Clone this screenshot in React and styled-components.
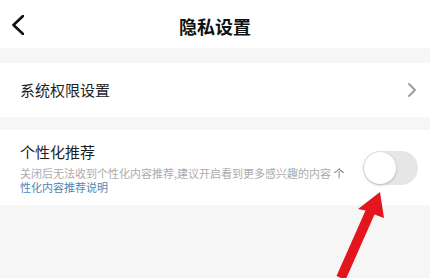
import styled, { createGlobalStyle } from 'styled-components';
import { useState } from 'react';

const GlobalStyle = createGlobalStyle`
  * { box-sizing: border-box; }
  body {
    margin: 0;
    background: #f6f6f6;
    font-family: "Noto Sans CJK SC", "Noto Sans", sans-serif;
  }
`;

export default function App(){
  const [on, setOn] = useState(false);
  return (
    <Page>
      <GlobalStyle />
      <Header>
        <BackButton>
          <svg width="12" height="20" viewBox="0 0 12 20">
            <polyline points="11,1 1.5,10 11,19" fill="none" stroke="#111" strokeWidth="2.6" strokeLinecap="round" strokeLinejoin="round" />
          </svg>
        </BackButton>
        <Title>隐私设置</Title>
        <span />
      </Header>
      <Gap size={15} />
      <LinkRow>
        <RowLabel>系统权限设置</RowLabel>
        <svg width="8" height="14" viewBox="0 0 8 14">
          <polyline points="1,1 7,7 1,13" fill="none" stroke="#9a9a9a" strokeWidth="1.8" strokeLinecap="round" strokeLinejoin="round" />
        </svg>
      </LinkRow>
      <Gap size={13} />
      <SwitchRow>
        <TextBlock>
          <RowLabel>个性化推荐</RowLabel>
          <Hint>
            关闭后无法收到个性化内容推荐,建议开启看到更多感兴趣的内容 <HintLink>个性化内容推荐说明</HintLink>
          </Hint>
        </TextBlock>
        <Toggle $on={on} onClick={()=>setOn(!on)}>
          <Knob $on={on} />
        </Toggle>
      </SwitchRow>
      <Arrow width="430" height="278" viewBox="0 0 430 278">
        <polygon
          points="380,192 384,218 374.5,214.5 345.5,280 336.5,276 365.5,210.5 358,209"
          fill="#e3161d"
        />
      </Arrow>
    </Page>
  );
}

const Page = styled.div`
  position: relative;
  width: 430px;
  height: 278px;
  overflow: hidden;
  background: #f6f6f6;
`;

const Header = styled.header`
  height: 48px;
  background: #fff;
  display: grid;
  grid-template-columns: 1fr auto 1fr;
  align-items: center;
  padding: 0 12px;
`;

const BackButton = styled.div`
  display: flex;
  align-items: center;
  height: 20px;
  margin-top: 2px;
`;

const Title = styled.h1`
  margin: 0;
  font-size: 18px;
  font-weight: 700;
  color: #111;
  line-height: 24px;
  margin-top: 3px;
`;

const Gap = styled.div`
  height: ${p => p.size}px;
`;

const LinkRow = styled.div`
  height: 54px;
  background: #fff;
  display: flex;
  align-items: center;
  justify-content: space-between;
  padding: 0 14px 0 20px;
`;

const RowLabel = styled.div`
  font-size: 15px;
  line-height: 20px;
  color: #1e1e1e;
`;

const SwitchRow = styled.div`
  height: 75px;
  background: #fff;
  display: flex;
  align-items: flex-start;
  justify-content: space-between;
  padding: 12px 12px 0 20px;
`;

const TextBlock = styled.div`
  width: 330px;
  display: flex;
  flex-direction: column;
  gap: 4px;
`;

const Hint = styled.p`
  margin: 0;
  font-size: 11px;
  line-height: 14px;
  color: #ababab;
`;

const HintLink = styled.span`
  color: #4f86b4;
`;

const Toggle = styled.div`
  width: 55px;
  height: 34px;
  margin-top: 9px;
  border-radius: 17px;
  background: ${p => p.$on ? '#4cd964' : '#e6e6e6'};
  position: relative;
  cursor: pointer;
`;

const Knob = styled.div`
  position: absolute;
  top: 1px;
  left: ${p => p.$on ? '22px' : '1px'};
  width: 32px;
  height: 32px;
  border-radius: 50%;
  background: #fff;
  box-shadow: 0 1px 3px rgba(0,0,0,0.22);
`;

const Arrow = styled.svg`
  position: absolute;
  left: 0;
  top: 0;
  pointer-events: none;
`;
